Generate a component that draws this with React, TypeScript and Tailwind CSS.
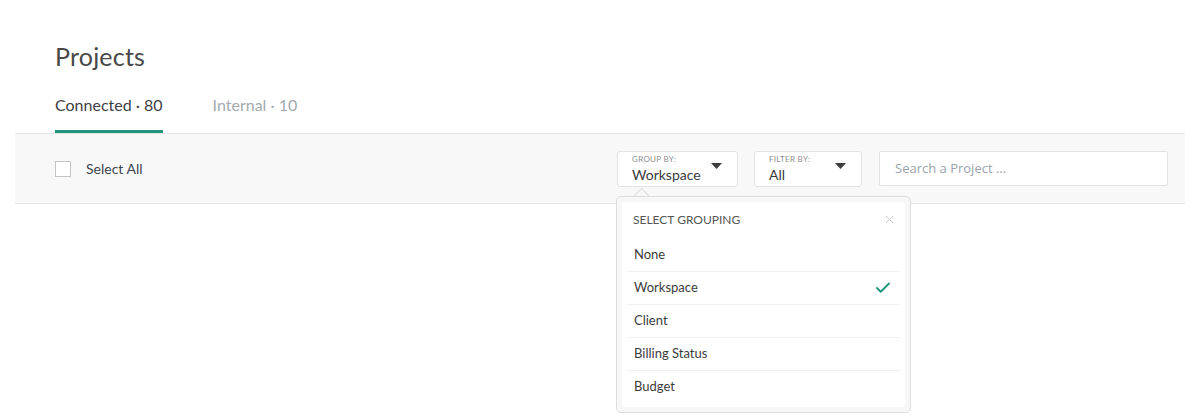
import React from 'react';
import { Check, X } from 'lucide-react';

const options = ['None', 'Workspace', 'Client', 'Billing Status', 'Budget'];

const Caret = () => (
  <svg width="11" height="6" viewBox="0 0 11 6" className="shrink-0">
    <path d="M0 0h11L5.5 6z" fill="#3d3d3d" />
  </svg>
);

const SelectBox: React.FC<{ label: string; value: string; width: string }> = ({ label, value, width }) => (
  <div className={`${width} h-[36px] bg-white border border-[#e3e3e3] rounded-[3px] flex items-center justify-between pl-[14px] pr-[15px]`}>
    <div className="flex flex-col">
      <span className="text-[8px] leading-[10px] tracking-[0.3px] text-[#8e8e8e] uppercase mt-[1px]">{label}</span>
      <span className="text-[14px] leading-[18px] text-[#3a3a3a] mt-[2px]">{value}</span>
    </div>
    <div className="-mt-[5px]">
      <Caret />
    </div>
  </div>
);

export default function App() {
  return (
    <div className="w-[1200px] h-[420px] bg-white px-[15px] font-['Lato',sans-serif] text-[#3c3c3c]">
      {/* header */}
      <div className="px-[40px] pt-[40px]">
        <h1 className="text-[25px] leading-[32px] text-[#484848] font-normal tracking-[0.2px]">Projects</h1>
        <div className="flex gap-[50px] mt-[23px]">
          <div className="flex flex-col">
            <span className="text-[16px] leading-[20px] text-[#3f3f46] pb-[15px]">Connected · 80</span>
            <div className="h-[3px] bg-[#22957f]" />
          </div>
          <span className="text-[16px] leading-[20px] text-[#a4aab0]">Internal · 10</span>
        </div>
      </div>

      {/* toolbar */}
      <div className="h-[71px] bg-[#f8f8f8] border-y border-[#e4e4e4] flex items-center pl-[40px] pr-[17px]">
        <label className="flex items-center gap-[15px]">
          <span className="w-[16px] h-[16px] border border-[#c4c4c4] bg-white" />
          <span className="text-[14px] text-[#3f4551]">Select All</span>
        </label>
        <div className="ml-auto flex items-center">
          <div className="relative">
            <SelectBox label="Group by:" value="Workspace" width="w-[121px]" />
            {/* dropdown */}
            <div className="absolute left-[-1px] top-[45px] w-[295px] z-10">
              <div className="absolute left-[20px] -top-[6px] w-[11px] h-[11px] rotate-45 bg-[#f7f7f7] border-l border-t border-[#dedede]" />
              <div className="relative bg-[#f7f7f7] border border-[#dedede] rounded-[5px] p-[5px]">
                <div className="bg-white rounded-[3px] px-[5px] pb-[4px]">
                  <div className="flex items-center justify-between pl-[6px] pr-[4px] pt-[10px] pb-[11px]">
                    <span className="text-[12px] leading-[16px] text-[#555] uppercase">Select grouping</span>
                    <X className="w-[13px] h-[13px] text-[#cacaca]" strokeWidth={1.8} />
                  </div>
                  {options.map((o, i) => (
                    <div
                      key={o}
                      className={`flex items-center justify-between pl-[7px] pr-[8px] ${i > 0 ? 'h-[33px] border-t border-[#f0f0f0]' : 'h-[32px]'}`}
                    >
                      <span className="text-[13px] text-[#3c3c3c]">{o}</span>
                      {o === 'Workspace' && <Check className="w-[18px] h-[18px] text-[#22957f]" strokeWidth={2.5} />}
                    </div>
                  ))}
                </div>
              </div>
            </div>
          </div>
          <div className="ml-[16px]">
            <SelectBox label="Filter by:" value="All" width="w-[108px]" />
          </div>
          <div className="ml-[17px] w-[289px] h-[35px] bg-white border border-[#e3e3e3] rounded-[2px] flex items-center px-[15px]">
            <span className="text-[13px] text-[#9ca3ab] font-['Open_Sans',sans-serif]">Search a Project ...</span>
          </div>
        </div>
      </div>
    </div>
  );
}
